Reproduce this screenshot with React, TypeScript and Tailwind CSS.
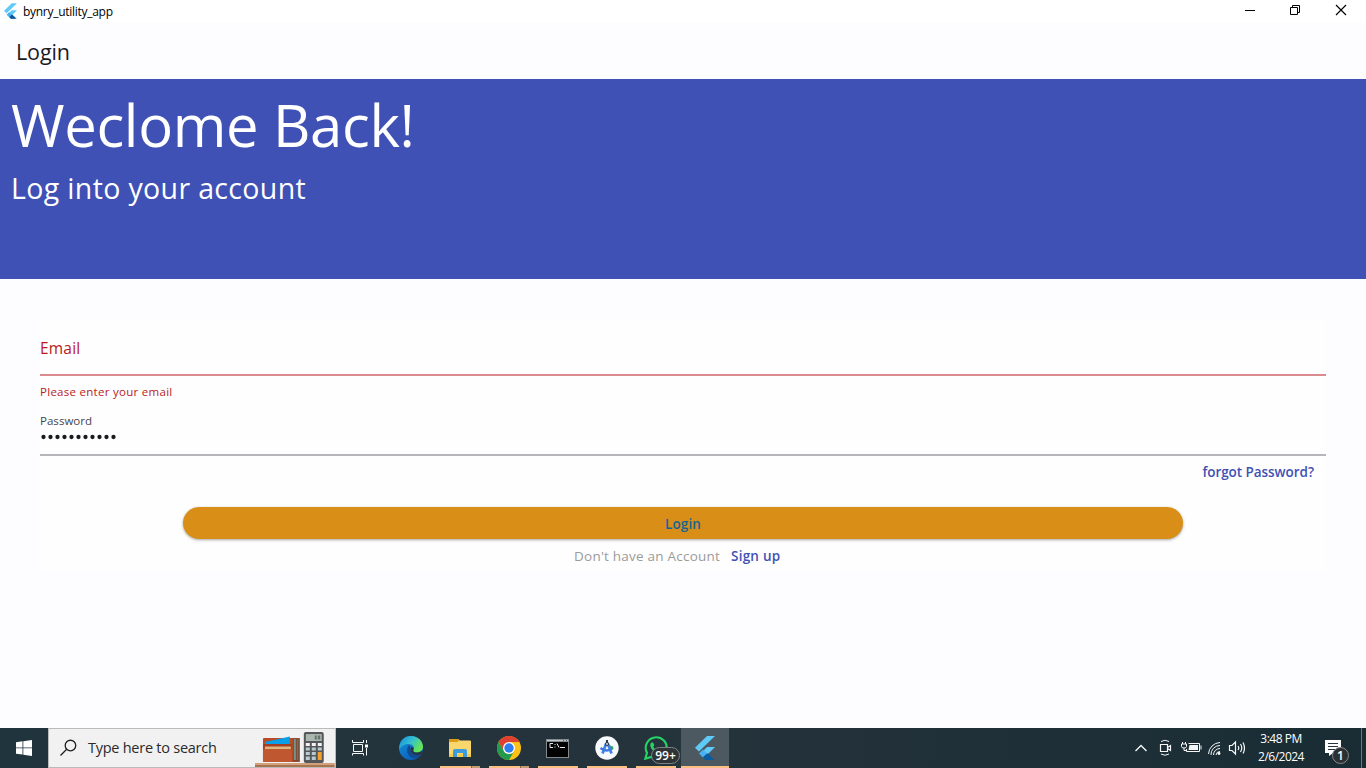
import React from "react";

function FlutterLogo({ className }: { className: string }) {
  return (
    <svg viewBox="0 0 20 24" className={className}>
      <path d="M12 0H20L4 15.5L0 11.8Z" fill="#5fc9f8" />
      <path d="M12 11H20L12 19L8 15Z" fill="#5fc9f8" />
      <path d="M8 15L12 19L17 24H20V24H12L5.5 17.5Z" fill="#0a5aa0" />
      <path d="M4 17.6L8 13.6L12 17.6L8 21.6Z" fill="#4bb0f0" />
      <path d="M12 17.6L8 21.6L10.5 24H19.5L13 17.6Z" fill="#0a5aa0" />
    </svg>
  );
}

function TitleBar() {
  return (
    <header className="flex h-[23px] shrink-0 items-start bg-white">
      <FlutterLogo className="ml-1 mt-[3px] h-4 w-[13px]" />
      <span className="ml-1.5 mt-[3px] flex-1 text-[12px] leading-[18px] tracking-[-0.28px] text-black">bynry_utility_app</span>
      <svg className="mr-[15px] mt-px h-5 w-[110px]" viewBox="0 0 110 20" fill="none" stroke="#000">
        <path d="M4 9.5H14" />
        <path d="M49.5 6.5H56.5V13.5H49.5ZM51.5 6V4.5H58.5V11.5H57" />
        <path d="M95 4L105 14M105 4L95 14" strokeWidth="1.200" />
      </svg>
    </header>
  );
}

function Form() {
  return (
    <main className="mx-10 mt-10 flex h-[253px] flex-col bg-[#fefefe]">
      <div className="h-[57px] border-b-2 border-[#d98b8e] pt-[17px] text-[15.5px] leading-6 tracking-[0.2px] text-[#ba1a1a]">Email</div>
      <div className="mt-[7px] h-5 text-[11.5px] leading-[18px] tracking-[0.28px] text-[#ba1a1a]">Please enter your email</div>
      <div className="mt-[9px] h-[44px] border-b-2 border-[#b7b7bb]">
        <div className="text-[11.5px] leading-[18px] tracking-[0.03px] text-[#46464f]">Password</div>
        <svg className="mt-[3px] h-2 w-20" viewBox="0 0 80 8" fill="#1b1b1f">
          {Array.from({ length: 11 }, (_, i) => (
            <circle key={i} cx={3.5 + i * 7} cy="4" r="2.15" />
          ))}
        </svg>
      </div>
      <div className="mt-1.5 flex h-5 justify-end pr-3 text-[13.5px] font-semibold leading-5 tracking-[-0.05px] text-[#3f51b5]">
        <button className="whitespace-nowrap">forgot Password?</button>
      </div>
      <button className="mx-auto mt-[25px] h-8 w-[1000px] shrink-0 rounded-full bg-[#d98f17] pt-0.5 text-[13.5px] font-semibold leading-[30px] tracking-[0.15px] text-[#176397] shadow-[0_1px_3px_rgba(0,0,0,0.35)]">
        Login
      </button>
      <div className="mt-[7px] flex h-5 pl-[534px] text-[13.5px] leading-5 tracking-[0.23px]">
        <span className="w-[157px] whitespace-nowrap text-[#9b9b9b]">Don't have an Account</span>
        <button className="whitespace-nowrap font-semibold text-[#3f51b5]">Sign up</button>
      </div>
    </main>
  );
}

function SearchArt() {
  return (
    <svg className="h-[38px] w-20" viewBox="0 0 80 38">
      <path d="M0 34H80V36H0Z" fill="#d0a17c" />
      <path d="M0 36H80V38H0Z" fill="#a8744e" />
      <path d="M37 9H45V33H37Z" fill="#86452c" />
      <path d="M39 10H41V31H39Z" fill="#72958b" />
      <path d="M42 10H43.5V31H42Z" fill="#527b77" />
      <rect x="8" y="9" width="30" height="24" rx="1" fill="#b94c28" />
      <path d="M10 13L35 7.5V15H10Z" fill="#079fe8" />
      <path d="M8 15H37V24H8Z" fill="#a63e23" />
      <path d="M10 17.5H36V20H10Z" fill="#ddb67d" />
      <path d="M8 20H37V32Q37 33 36 33H9Q8 33 8 32Z" fill="#bf5730" />
      <rect x="49" y="3" width="20" height="31" rx="2" fill="#555659" />
      <rect x="51" y="5" width="16" height="7" fill="#aab7ae" />
      <path d="M60 6.5H62V10.5H60ZM63 6.5H65.5V10.5H63Z" fill="#66736d" />
      <path d="M51 14H55V17H51ZM57 14H61V17H57ZM63 14H67V17H63Z" fill="#f4f2f2" />
      <path d="M51 18.5H55V21.5H51ZM57 18.5H61V21.5H57ZM63 18.5H67V21.5H63ZM51 23H55V26H51ZM57 23H61V26H57ZM51 27.5H55V31H51ZM57 27.5H61V31H57Z" fill="#b7cbd0" />
      <path d="M63 23H67V31H63Z" fill="#f0a22e" />
    </svg>
  );
}

function EdgeIcon() {
  return (
    <svg className="ml-px size-6" viewBox="0 0 24 24">
      <defs>
        <linearGradient id="edgeTop" x1="0" y1="0" x2="1" y2="0.5">
          <stop offset="0" stopColor="#1789d4" />
          <stop offset="0.5" stopColor="#32bfd5" />
          <stop offset="1" stopColor="#66e653" />
        </linearGradient>
        <linearGradient id="edgeBase" x1="0" y1="0" x2="0.6" y2="1">
          <stop offset="0" stopColor="#1595dc" />
          <stop offset="1" stopColor="#0a60b8" />
        </linearGradient>
      </defs>
      <circle cx="12" cy="12" r="12" fill="url(#edgeBase)" />
      <path d="M.5 10C2 3 6.5 0 12 0C19 0 24 5 24 11C24 14.500 21 16.500 18 16.500C15 16.500 13.500 15.500 14.800 13.500C15.800 11 13.500 8 9.500 8C5 8 1.500 10.500 .5 14Z" fill="url(#edgeTop)" />
      <path d="M10 9C6 13 8.500 22 15.500 22.300C18.500 22.300 21 20.500 22.700 18C16 20.500 9.500 17 11.500 11Z" fill="#124b93" />
      <path d="M22.700 18C18 20 13.500 18.500 11.700 15.500C11 13.500 11.500 12 12.500 11C15.500 11.500 14.500 13 14 14.500C14 17 20 17.500 23 14.500Z" fill="#27363d" />
    </svg>
  );
}

function ExplorerIcon() {
  return (
    <svg className="h-[19px] w-[22px]" viewBox="0 0 22 19">
      <path d="M0 1Q0 0 1 0H9L11 1.500H21Q22 1.500 22 2.500V18H0Z" fill="#f9d76d" />
      <path d="M0 1Q0 0 1 0H9L10 1.500L8.500 3H0Z" fill="#dc9c13" />
      <path d="M0 15H22V18H0Z" fill="#f5c84e" />
      <path d="M4 18V12Q4 10 6 10H16Q18 10 18 12V18H14V14H8V18Z" fill="#3c9bdc" />
    </svg>
  );
}

function ChromeIcon() {
  return (
    <svg className="size-6" viewBox="0 0 24 24">
      <circle cx="12" cy="12" r="12" fill="#fbc116" />
      <path d="M1.600 6A12 12 0 0 1 22.400 6H12L6.800 15Z" fill="#df4032" />
      <path d="M1.600 6A12 12 0 0 0 12 24L17.200 15A6 6 0 0 1 6.800 15Z" fill="#229a50" />
      <circle cx="12" cy="12" r="6" fill="#fff" />
      <circle cx="12" cy="12" r="4.700" fill="#2d7df0" />
    </svg>
  );
}

function TerminalIcon() {
  return (
    <svg className="mr-px h-[19px] w-[23px]" viewBox="0 0 23 19">
      <path d="M0 0H23V19H0Z" fill="#858b8d" />
      <path d="M1 2.500H22V18H1Z" fill="#030303" />
      <path d="M1 1H22V2.500H1Z" fill="#c0cdd4" />
      <path d="M17 1H18V2H17ZM20 1H21V2H20Z" fill="#425e6c" />
      <path d="M7 4.500H4V8.500H7M9 5V6M9 7.500V8.500M11 4.500L13 8.500M14 8.500H19" fill="none" stroke="#e9e9e9" strokeWidth="1" />
    </svg>
  );
}

function StudioIcon() {
  return (
    <svg className="size-6" viewBox="0 0 24 24">
      <circle cx="12" cy="12" r="11.700" fill="#f7f9fc" />
      <path d="M15 9.500L18 10.500L18.500 13L16 14.500L14 13Z" fill="#2fa65b" />
      <path d="M11 8L7.500 17.500M13 8L16.500 17.500" stroke="#4384ea" strokeWidth="2.800" />
      <path d="M5.500 12Q11 16.500 16 13" fill="none" stroke="#3c7ce0" strokeWidth="2.300" />
      <path d="M12 4V7" stroke="#263946" strokeWidth="2" />
      <circle cx="12" cy="8" r="1.500" fill="#e6edf2" stroke="#263946" strokeWidth="1.200" />
    </svg>
  );
}

function WhatsappIcon() {
  return (
    <svg className="size-6" viewBox="0 0 24 24">
      <path d="M1.300 22.700L3 16.800A10.500 10.500 0 1 1 7.200 21Z" fill="none" stroke="#25d366" strokeWidth="2.100" />
      <path d="M7.400 6.500C5.500 8 6 11 8.500 14C11 17 14.500 19 17 17.500C18.500 16.600 18.500 15.200 18 14.800L15.400 13.500L14 15C12 14.500 10 12.500 9.300 10.700L10.300 9.200L9.200 6.500Z" fill="#25d366" />
    </svg>
  );
}

type TaskProps = { children: React.ReactNode; stacked?: boolean; running?: boolean };

function Task({ children, stacked, running = true }: TaskProps) {
  return (
    <div className="relative flex h-10 w-[49px] shrink-0 items-center justify-center pr-px">
      {children}
      {running && (
        <div className="absolute bottom-0 left-[4px] flex h-0.5 w-10 bg-[#fcc083]">
          {stacked && <span className="ml-[31px] w-[9px] border-l border-[#806a55] bg-[#c49b72]" />}
        </div>
      )}
    </div>
  );
}

function Tray() {
  return (
    <div className="ml-auto flex h-10 shrink-0 text-white">
      <svg className="h-10 w-[120px]" viewBox="0 0 120 40" fill="none" stroke="#f5f7f7" strokeWidth="1.200">
        <path d="M10.500 23L16 17.500L21.500 23" strokeWidth="1.400" />
        <path d="M35.500 16.500H42.500V23.500H35.500ZM42.500 19.500L45.500 17.500V22.500L42.500 20.500" />
        <path d="M36 13.500Q40 11 44 13.500M36 26Q40 28.500 44 26" strokeWidth="1" />
        <path d="M57.500 14V16M60.500 14V16" strokeWidth="1" />
        <path d="M56.500 16H61.500V18.500Q61.500 20 59 20Q56.500 20 56.500 18.500ZM59 20V22.500H61" strokeWidth="1" />
        <path d="M63.500 15.500H74.500V23.500H61.500V21M76 17.500V21.500" strokeWidth="1" />
        <path d="M64.500 17H73V22H63.500Z" fill="#f5f7f7" stroke="none" />
        <path d="M83.500 26A12 12 0 0 1 95 14.500M86 27A9 9 0 0 1 95 17.500M88.500 27A6.500 6.500 0 0 1 95 20.500" strokeWidth="1" />
        <path d="M91 27A4 4 0 0 1 95 23.500" strokeWidth="1" />
        <circle cx="94" cy="25.500" r="1.400" fill="#fff" stroke="none" />
        <path d="M104.500 17.500H107L110.500 14V26L107 22.500H104.500ZM113 18Q114.500 20 113 22M115.500 16Q118 20 115.500 24M118 14.500Q121 20 118 25.500" />
      </svg>
      <div className="ml-2 w-[56px] pt-0.5 text-center text-[12px] leading-[18px] tracking-[-0.5px]">
        <div className="whitespace-nowrap">3:48 PM</div>
        <div className="whitespace-nowrap">2/6/2024</div>
      </div>
      <div className="relative ml-[15px] w-[37px]">
        <svg className="mt-[12px] h-[17px] w-[18px]" viewBox="0 0 18 17">
          <path d="M1 0H17V13H9L5 16V13H1Z" fill="#fff" />
          <path d="M4 3.500H14M4 6.500H14M4 9.500H11" stroke="#26363f" strokeWidth="1" />
        </svg>
        <span className="absolute left-[8px] top-[19px] flex size-[17px] items-center justify-center rounded-full border border-[#858a8b] bg-[#2d3032] text-[12px] font-semibold leading-none">1</span>
      </div>
      <span className="w-[5px] border-l border-[#6d787d]" />
    </div>
  );
}

function Taskbar() {
  return (
    <footer className="flex h-10 shrink-0 bg-linear-to-r from-[#20343e] via-[#25333b] to-[#192c34]">
      <div className="flex w-12 shrink-0 items-center justify-center">
        <svg className="size-4" viewBox="0 0 16 16" fill="#fff">
          <path d="M0 2.200L6.500 1.300V7.500H0ZM7.300 1.200L16 0V7.500H7.300ZM0 8.300H6.500V14.600L0 13.700ZM7.300 8.300H16V16L7.300 14.800Z" />
        </svg>
      </div>
      <div className="flex w-[288px] shrink-0 border border-[#bababa] bg-[#f1f1f1]">
        <svg className="ml-[11px] mt-[10px] h-[18px] w-[17px]" viewBox="0 0 17 18" fill="none" stroke="#202020" strokeWidth="1.300">
          <circle cx="10.500" cy="6.500" r="5.300" />
          <path d="M6.700 10.300L.5 16.500" />
        </svg>
        <span className="ml-[11px] w-[168px] whitespace-nowrap pt-[9px] text-[14.5px] leading-5 tracking-[-0.25px] text-[#2b2b2b]">Type here to search</span>
        <SearchArt />
      </div>
      <div className="flex w-[50px] shrink-0 items-center justify-center pr-0.5">
        <svg className="h-4 w-[17px]" viewBox="0 0 17 16" fill="none" stroke="#f4f7f7" strokeWidth="1">
          <path d="M.5 0V2.500H11.500V0M.5 15.500V13.500H11.500V15.500M1.500 4.500H10.500V11.500H1.500ZM14.500 0V3M14.500 8V15.500" />
          <path d="M13 4.500H16V7.500H13Z" fill="#fff" stroke="none" />
        </svg>
      </div>
      <Task running={false}><EdgeIcon /></Task>
      <div className="w-px" />
      <Task stacked><ExplorerIcon /></Task>
      <Task stacked><ChromeIcon /></Task>
      <Task><TerminalIcon /></Task>
      <Task><StudioIcon /></Task>
      <Task>
        <WhatsappIcon />
        <span className="absolute left-[19px] top-[19px] flex h-[17px] w-[29px] items-center justify-center rounded-full border border-[#7e8485] bg-[#303335] text-[12px] font-semibold leading-none text-white">99+</span>
      </Task>
      <div className="flex h-10 w-12 shrink-0 items-center justify-center border-b-2 border-[#fcc083] bg-[#4d5960]">
        <FlutterLogo className="mt-0.5 h-6 w-5" />
      </div>
      <Tray />
    </footer>
  );
}

export default function App() {
  return (
    <div className="flex h-[768px] w-[1366px] flex-col overflow-hidden bg-[#fdfdff] font-['Open_Sans','Noto_Sans',sans-serif]">
      <TitleBar />
      <div className="h-14 shrink-0 pl-4 pt-[14px] text-[21.5px] leading-[30px] tracking-[-0.1px] text-[#1b1b1f]">Login</div>
      <section className="h-[200px] shrink-0 bg-[#3f51b5] pl-[11px] text-white">
        <h1 className="h-[88px] pt-[6px] text-[58px] leading-[80px] tracking-[-0.35px]">Weclome Back!</h1>
        <p className="text-[28.5px] leading-[42px] tracking-[0.35px]">Log into your account</p>
      </section>
      <div className="flex-1">
        <Form />
      </div>
      <Taskbar />
    </div>
  );
}
